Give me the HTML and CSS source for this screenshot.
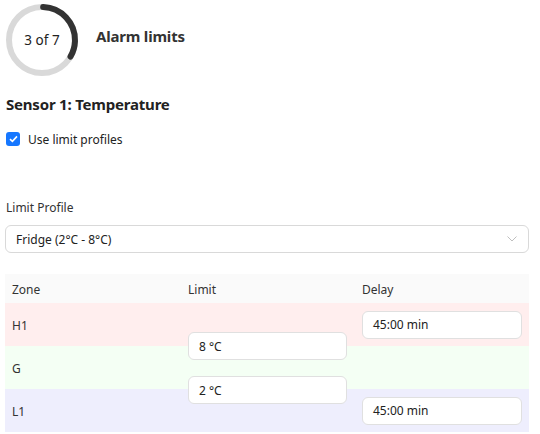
FILE: index.html
```html
<!DOCTYPE html>
<html>
<head>
<meta charset="utf-8">
<link rel="stylesheet" href="styles.css">
</head>
<body>
<div class="page">
  <div class="top">
    <div class="ring">
      <svg width="74" height="74" viewBox="0 0 74 74">
        <circle cx="37" cy="37" r="33" fill="none" stroke="#d9d9d9" stroke-width="6"/>
        <circle cx="37" cy="37" r="33" fill="none" stroke="#333" stroke-width="6" stroke-linecap="round" stroke-dasharray="68 300" transform="rotate(-88 37 37)"/>
      </svg>
      <span class="ring-text">3 of 7</span>
    </div>
    <div class="title">Alarm limits</div>
  </div>
  <h2 class="sensor">Sensor 1: Temperature</h2>
  <label class="check">
    <span class="box">
      <svg width="9" height="8" viewBox="0 0 9 8"><path d="M1 4.2 L3.4 6.4 L8 1.4" fill="none" stroke="#fff" stroke-width="1.6"/></svg>
    </span>
    <span>Use limit profiles</span>
  </label>
  <div class="label">Limit Profile</div>
  <div class="select">
    <span>Fridge (2°C - 8°C)</span>
    <svg width="10" height="6" viewBox="0 0 10 6"><path d="M0.5 0.5 L5 5 L9.5 0.5" fill="none" stroke="#bfbfbf" stroke-width="1"/></svg>
  </div>
  <div class="table">
    <div class="row head">
      <div class="cell">Zone</div>
      <div class="cell">Limit</div>
      <div class="cell">Delay</div>
    </div>
    <div class="body">
      <div class="row h1">
        <div class="cell">H1</div>
        <div class="cell"></div>
        <div class="cell"><div class="input">45:00 min</div></div>
      </div>
      <div class="row g">
        <div class="cell">G</div>
        <div class="cell"></div>
        <div class="cell"></div>
      </div>
      <div class="row l1">
        <div class="cell">L1</div>
        <div class="cell"></div>
        <div class="cell"><div class="input">45:00 min</div></div>
      </div>
      <div class="input limit limit-high">8 °C</div>
      <div class="input limit limit-low">2 °C</div>
    </div>
  </div>
</div>
</body>
</html>
```
FILE: styles.css
```css
* { box-sizing: border-box; }
html, body { margin: 0; padding: 0; background: #fff; }
body {
  font-family: "Noto Sans", "Open Sans", sans-serif;
  font-size: 12px;
  color: #222;
}
.page { padding: 3px 12px 0 5px; width: 540px; }
.top { display: flex; align-items: center; }
.ring { position: relative; width: 74px; height: 74px; }
.ring svg { display: block; }
.ring-text {
  position: absolute; inset: 0;
  display: flex; align-items: center; justify-content: center;
  font-size: 13.5px; color: #222;
}
.title { margin-left: 17px; font-size: 15px; font-weight: 700; color: #333; margin-top: -9px; letter-spacing: -0.2px; }
.sensor { margin: 17px 0 0 1px; font-size: 15px; font-weight: 700; color: #222; line-height: 20px; letter-spacing: -0.2px; }
.check { display: flex; align-items: center; margin: 17px 0 0 1px; gap: 8px; height: 16px; }
.box {
  width: 14px; height: 14px; border-radius: 3px; background: #1677ff;
  display: flex; align-items: center; justify-content: center;
}
.label { margin: 53px 0 0 1px; line-height: 16px; color: #333; }
.select {
  margin-top: 9px; height: 28px; width: 524px;
  border: 1px solid #d9d9d9; border-radius: 6px;
  display: flex; align-items: center; justify-content: space-between;
  padding: 0 11px 0 10px; color: #222;
}
.table { margin-top: 21px; width: 524px; }
.row { display: grid; grid-template-columns: 176px 174px 174px; }
.head { background: #fafafa; height: 29px; align-items: center; }
.cell { padding-left: 7px; display: flex; align-items: center; color: #333; }
.head .cell { padding-top: 2px; }
.body { position: relative; }
.body .row { height: 43px; }
.body .row > .cell:first-child { padding-top: 1px; }
.h1 { background: #ffeeee; }
.g { background: #f4fff4; }
.l1 { background: #eeeefd; }
.input {
  background: #fff; border: 1px solid #e0e0e0; border-radius: 6px;
  height: 28px; width: 160px; display: flex; align-items: center;
  padding-left: 10px; color: #222;
}
.limit { position: absolute; left: 183px; width: 159px; }
.limit-high { top: 29px; }
.limit-low { top: 73px; }
```
